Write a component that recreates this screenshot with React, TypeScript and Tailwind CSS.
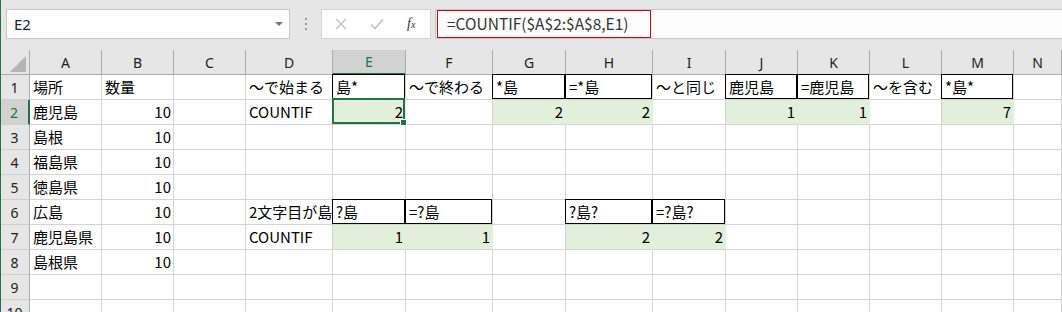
import React from 'react';

type Cell = { v: string; num?: boolean; fill?: boolean; box?: boolean };

const COLS = ['A', 'B', 'C', 'D', 'E', 'F', 'G', 'H', 'I', 'J', 'K', 'L', 'M', 'N'];
const ROWS = [1, 2, 3, 4, 5, 6, 7, 8, 9, 10];

// sheet contents, keyed by address
const cells: Record<string, Cell> = {
    A1: { v: '場所' }, B1: { v: '数量' }, D1: { v: '～で始まる' }, E1: { v: '島*', box: true },
    F1: { v: '～で終わる' }, G1: { v: '*島', box: true }, H1: { v: '=*島', box: true }, I1: { v: '～と同じ' },
    J1: { v: '鹿児島', box: true }, K1: { v: '=鹿児島', box: true }, L1: { v: '～を含む' }, M1: { v: '*島*', box: true },

    A2: { v: '鹿児島' }, B2: { v: '10', num: true }, D2: { v: 'COUNTIF' }, E2: { v: '2', num: true, fill: true },
    G2: { v: '2', num: true, fill: true }, H2: { v: '2', num: true, fill: true },
    J2: { v: '1', num: true, fill: true }, K2: { v: '1', num: true, fill: true }, M2: { v: '7', num: true, fill: true },

    A3: { v: '島根' }, B3: { v: '10', num: true },
    A4: { v: '福島県' }, B4: { v: '10', num: true },
    A5: { v: '徳島県' }, B5: { v: '10', num: true },

    A6: { v: '広島' }, B6: { v: '10', num: true }, D6: { v: '2文字目が島' },
    E6: { v: '?島', box: true }, F6: { v: '=?島', box: true }, H6: { v: '?島?', box: true }, I6: { v: '=?島?', box: true },

    A7: { v: '鹿児島県' }, B7: { v: '10', num: true }, D7: { v: 'COUNTIF' },
    E7: { v: '1', num: true, fill: true }, F7: { v: '1', num: true, fill: true },
    H7: { v: '2', num: true, fill: true }, I7: { v: '2', num: true, fill: true },

    A8: { v: '島根県' }, B8: { v: '10', num: true },
};

const SELECTED = 'E2';

const FormulaBar = () => (
    <div className="h-[50px] flex items-start pt-[9px] pl-[6px] font-['Noto_Sans',sans-serif]">
        {/* name box */}
        <div className="w-[284px] h-[30px] bg-white border border-[#c6c6c6] flex items-center justify-between pl-[7px] pr-[6px]">
            <span className="text-[15px] text-[#222]">E2</span>
            <span className="w-0 h-0 border-l-[4px] border-r-[4px] border-t-[4px] border-l-transparent border-r-transparent border-t-[#777]" />
        </div>
        <div className="w-[31px] h-[30px] flex flex-col items-center justify-center gap-[3px]">
            <span className="w-[2px] h-[2px] bg-[#9a9a9a]" />
            <span className="w-[2px] h-[2px] bg-[#9a9a9a]" />
            <span className="w-[2px] h-[2px] bg-[#9a9a9a]" />
        </div>
        {/* cancel / enter / fx */}
        <div className="w-[110px] h-[30px] bg-white border border-[#d4d4d4] flex items-center">
            <svg width="12" height="12" viewBox="0 0 12 12" className="ml-[13px]">
                <path d="M1 1 L11 11 M11 1 L1 11" stroke="#c0c0c0" strokeWidth="1.4" />
            </svg>
            <svg width="14" height="12" viewBox="0 0 14 12" className="ml-[23px]">
                <path d="M1 6.5 L5 10.5 L13 1.5" stroke="#c0c0c0" strokeWidth="1.6" fill="none" />
            </svg>
            <span className="ml-[23px] text-[14px] italic font-['Liberation_Serif',serif] text-[#333] leading-none">
                f<span className="text-[10px]">x</span>
            </span>
        </div>
        {/* formula input */}
        <div className="ml-[4px] flex-1 h-[30px] bg-[#fdfdfd] border-y border-l border-[#c6c6c6] flex items-center pl-[1px]">
            <div className="w-[214px] h-[28px] border border-[#e00000] flex items-center pl-[9px]">
                <span className="text-[15.5px] text-[#333] font-['Noto_Sans_CJK_JP',sans-serif] whitespace-nowrap">=COUNTIF($A$2:$A$8,E1)</span>
            </div>
        </div>
    </div>
);

export default function App() {
    return (
        <div className="relative w-[1062px] h-[312px] overflow-hidden bg-[#e6e6e6]">
            <div className="absolute left-0 top-0 bottom-0 w-px bg-[#217346] z-20" />
            <FormulaBar />

            <div className="grid grid-cols-[30px_72px_72px_72px_87px_73px_87px_73px_87px_73px_72px_72px_72px_72px_48px] auto-rows-[25px]">
                {/* select-all corner */}
                <div className="relative bg-[#e6e6e6] border-r border-b border-[#ababab]">
                    <svg width="16" height="16" viewBox="0 0 16 16" className="absolute left-[10px] top-[6px] block">
                        <polygon points="16,0 16,16 0,16" fill="#b4b4b4" />
                    </svg>
                </div>
                {COLS.map((c) => {
                    const sel = c === 'E';
                    return (
                        <div
                            key={c}
                            className={`flex items-center justify-center text-[14px] font-['Noto_Sans',sans-serif] border-r border-[#ababab] ${sel ? 'bg-[#d2d2d2] text-[#217346] border-b-2 border-b-[#217346]' : 'bg-[#e6e6e6] text-[#222] border-b border-b-[#ababab]'}`}
                        >
                            {c}
                        </div>
                    );
                })}

                {ROWS.map((r) => (
                    <React.Fragment key={r}>
                        <div
                            className={`flex items-center justify-center text-[14px] font-['Noto_Sans',sans-serif] border-b border-b-[#d0d0d0] ${r === 2 ? 'bg-[#d2d2d2] text-[#217346] border-r-2 border-r-[#217346]' : 'bg-[#e6e6e6] text-[#222] border-r border-r-[#ababab]'}`}
                        >
                            {r}
                        </div>
                        {COLS.map((c) => {
                            const addr = `${c}${r}`;
                            const cell = cells[addr];
                            return (
                                <div
                                    key={addr}
                                    className={`relative flex items-center whitespace-nowrap text-[15px] text-black font-['Noto_Sans_CJK_JP',sans-serif] border-b border-b-[#d4d4d4] border-r ${cell?.fill ? 'bg-[#e2efda] border-r-[#e2efda]' : 'bg-white border-r-[#d4d4d4]'} ${cell?.num ? 'justify-end pr-[2px]' : 'pl-[3px]'}`}
                                >
                                    {cell?.v}
                                    {cell?.box && (
                                        <span className="pointer-events-none absolute -left-px -top-px right-0 bottom-0 border border-black" />
                                    )}
                                    {addr === SELECTED && (
                                        <span className="pointer-events-none absolute -left-px -top-[2px] right-0 bottom-0 border-2 border-[#217346] z-10">
                                            <span className="absolute -right-[4px] -bottom-[4px] w-[7px] h-[7px] bg-[#217346] border border-white" />
                                        </span>
                                    )}
                                </div>
                            );
                        })}
                    </React.Fragment>
                ))}
            </div>
        </div>
    );
}
